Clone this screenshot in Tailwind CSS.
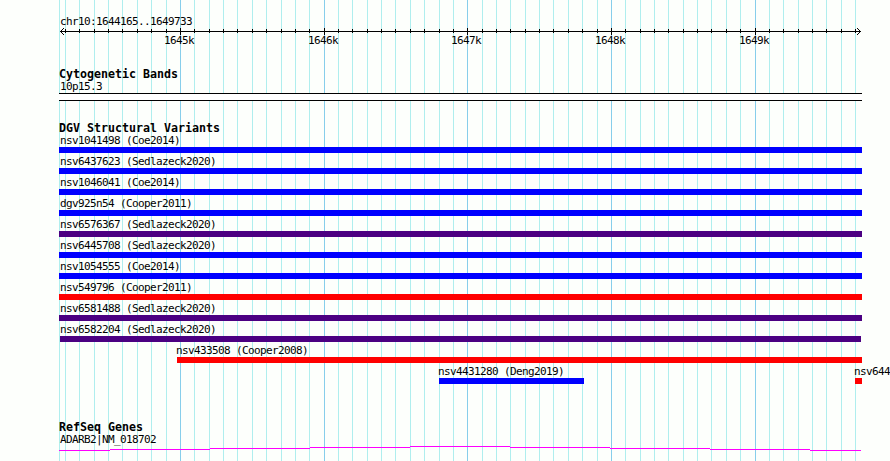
<!DOCTYPE html>
<html lang="en">
<head>
    <meta charset="UTF-8">
    <meta name="viewport" content="width=device-width, initial-scale=1.0">
    <title>chr10:1644165..1649733</title>
    <script src="https://cdn.jsdelivr.net/npm/@tailwindcss/browser@4"></script>
</head>
<body class="relative w-[890px] h-[461px] overflow-hidden bg-[#fdfffc] text-black font-['DejaVu_Sans_Mono',monospace] text-[11px] leading-[17px] tracking-[-0.62px] whitespace-nowrap">

    <!-- Grid lines behind all tracks -->
    <svg id="grid" class="absolute inset-0" width="890" height="461" shape-rendering="crispEdges"></svg>

    <main class="relative flex flex-col pl-[59px]">

        <!-- Ruler -->
        <section class="h-[66px] pt-[13px]">
            <p class="h-[15px] pl-px">chr10:1644165..1649733</p>
            <svg id="ruler" class="block" width="803" height="22" overflow="visible"></svg>
        </section>

        <!-- Cytogenetic bands -->
        <section class="h-[54px]">
            <h2 class="h-3 font-bold text-[11.63px] tracking-normal">Cytogenetic Bands</h2>
            <p class="h-[15px] pl-px">10p15.3</p>
            <div class="w-[803px] h-2 border-y border-black bg-white"></div>
        </section>

        <!-- Structural variants -->
        <section class="h-[299px]">
            <h2 class="h-3 font-bold text-[11.63px] tracking-normal">DGV Structural Variants</h2>
            <div id="variants"></div>
            <div class="flex h-[21px] pl-[118px]">
                <div class="w-[685px]">
                    <p class="h-[15px] -ml-px">nsv433508 (Cooper2008)</p>
                    <div class="h-1.5 bg-[#ff0000]"></div>
                </div>
            </div>
            <div class="flex h-[21px] pl-[380px] gap-[271px]">
                <div class="w-[145px] shrink-0">
                    <p class="h-[15px] -ml-px">nsv4431280 (Deng2019)</p>
                    <div class="h-1.5 bg-[#0000ff]"></div>
                </div>
                <div class="w-[7px] shrink-0">
                    <p class="h-[15px] -ml-px">nsv644</p>
                    <div class="h-1.5 bg-[#ff0000]"></div>
                </div>
            </div>
        </section>

        <!-- Genes -->
        <section>
            <h2 class="h-3 font-bold text-[11.63px] tracking-normal">RefSeq Genes</h2>
            <p class="h-[15px] pl-px">ADARB2|NM_018702</p>
            <svg id="gene" class="block" width="803" height="15" shape-rendering="crispEdges"></svg>
        </section>
    </main>

    <script>
        const LEFT = 59;
        const minor = [
            65, 79, 94, 108, 122, 137, 151, 166,
            194, 209, 223, 237, 252, 266, 281, 295, 309,
            338, 352, 367, 381, 395, 410, 424, 439, 453,
            482, 496, 510, 525, 539, 553, 568, 582, 597,
            625, 640, 654, 668, 683, 697, 711, 726, 740,
            769, 783, 798, 812, 826, 841, 855
        ];
        const major = { 180: '1645k', 324: '1646k', 467: '1647k', 611: '1648k', 755: '1649k' };

        // --- Grid ---
        let grid = '';
        [LEFT, ...minor].forEach(x => {
            grid += `<rect x="${x}" y="0" width="1" height="461" fill="#afeeee"/>`;
        });
        Object.keys(major).forEach(x => {
            grid += `<rect x="${x}" y="0" width="1" height="461" fill="#87ceeb"/>`;
        });
        document.getElementById('grid').innerHTML = grid;

        // --- Ruler: axis line, arrow heads, ticks and labels ---
        let ruler = `
            <g shape-rendering="crispEdges">
            <rect x="1" y="3" width="801" height="1"/>
            <path d="M2 2h1v1h-1zM3 1h1v1h-1zM4 0h1v1h-1zM2 4h1v1h-1zM3 5h1v1h-1zM4 6h1v1h-1z"/>
            <path d="M800 2h1v1h-1zM799 1h1v1h-1zM798 0h1v1h-1zM800 4h1v1h-1zM799 5h1v1h-1zM798 6h1v1h-1z"/>
        `;
        minor.forEach(x => {
            ruler += `<rect x="${x - LEFT}" y="1" width="1" height="4"/>`;
        });
        Object.keys(major).forEach(x => {
            ruler += `<rect x="${x - LEFT}" y="0" width="1" height="7"/>`;
        });
        ruler += '</g>';
        Object.entries(major).forEach(([x, label]) => {
            ruler += `<text x="${x - LEFT - 16}" y="16">${label}</text>`;
        });
        document.getElementById('ruler').innerHTML = ruler;

        // --- Variants that span the whole region ---
        const gain = 'h-1.5 w-[803px] bg-[#0000ff]';
        const loss = 'h-1.5 w-[803px] bg-[#ff0000]';
        const both = 'h-1.5 w-[803px] bg-[#4b0082]';
        const variants = [
            ['nsv1041498 (Coe2014)', gain],
            ['nsv6437623 (Sedlazeck2020)', gain],
            ['nsv1046041 (Coe2014)', gain],
            ['dgv925n54 (Cooper2011)', gain],
            ['nsv6576367 (Sedlazeck2020)', both],
            ['nsv6445708 (Sedlazeck2020)', gain],
            ['nsv1054555 (Coe2014)', gain],
            ['nsv549796 (Cooper2011)', loss],
            ['nsv6581488 (Sedlazeck2020)', both],
            ['nsv6582204 (Sedlazeck2020)', 'h-1.5 w-[801px] ml-px bg-[#4b0082]']
        ];
        document.getElementById('variants').innerHTML = variants.map(([name, bar]) => `
            <div class="h-[21px]">
                <p class="h-[15px] pl-px">${name}</p>
                <div class="${bar}"></div>
            </div>
        `).join('');

        // --- Intron line, rises and falls one pixel per step ---
        const steps = [[59, 4], [110, 3], [210, 2], [310, 1], [410, 0], [510, 1], [610, 2], [710, 3], [810, 4]];
        document.getElementById('gene').innerHTML = steps.map(([x, y], i) => {
            const end = i + 1 < steps.length ? steps[i + 1][0] : 861;
            return `<rect x="${x - LEFT}" y="${y}" width="${end - x}" height="1" fill="#ff00ff"/>`;
        }).join('');
    </script>

</body>
</html>
